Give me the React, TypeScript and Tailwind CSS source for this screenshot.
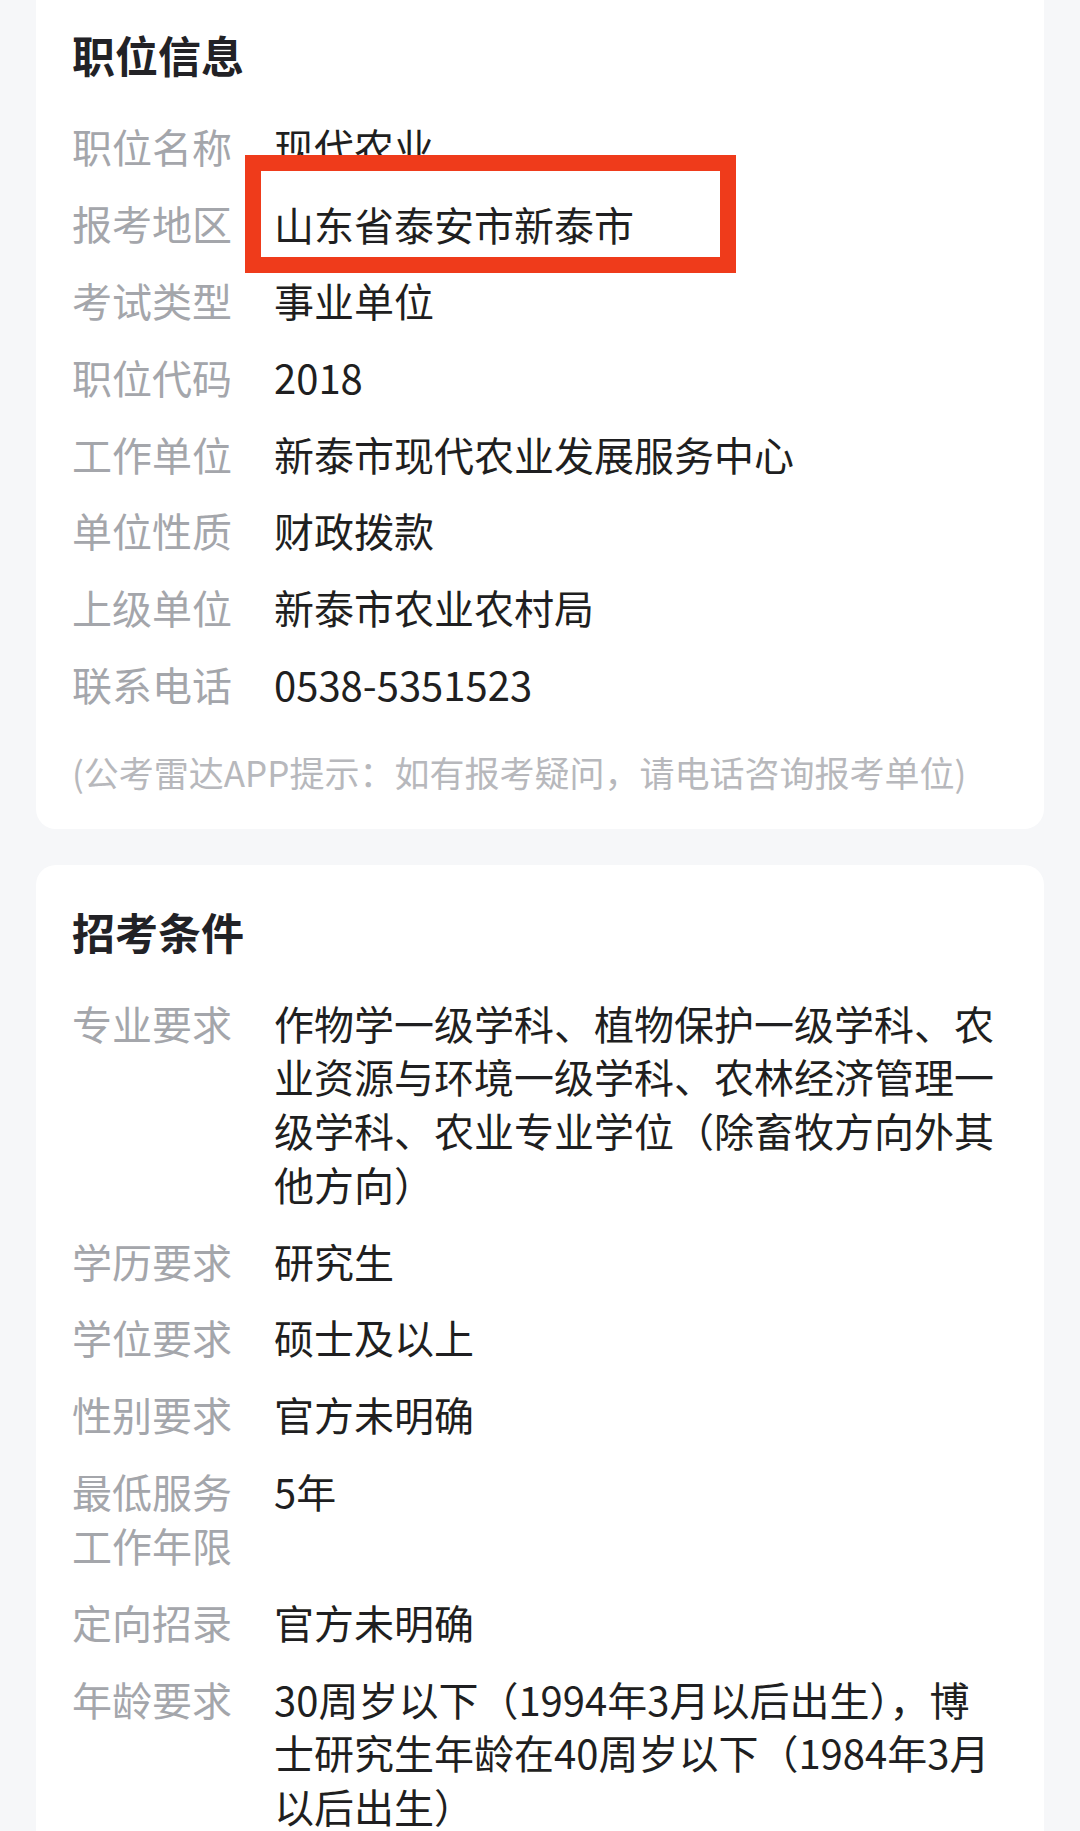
const font = { fontFamily: '"Noto Sans CJK SC", "Noto Sans", sans-serif' }

const jobInfo = [
  { label: '职位名称', value: '现代农业' },
  { label: '报考地区', value: '山东省泰安市新泰市' },
  { label: '考试类型', value: '事业单位' },
  { label: '职位代码', value: '2018' },
  { label: '工作单位', value: '新泰市现代农业发展服务中心' },
  { label: '单位性质', value: '财政拨款' },
  { label: '上级单位', value: '新泰市农业农村局' },
  { label: '联系电话', value: '0538-5351523' },
]

const conditions = [
  { label: '专业要求', value: '作物学一级学科、植物保护一级学科、农业资源与环境一级学科、农林经济管理一级学科、农业专业学位（除畜牧方向外其他方向）' },
  { label: '学历要求', value: '研究生' },
  { label: '学位要求', value: '硕士及以上' },
  { label: '性别要求', value: '官方未明确' },
  { label: '最低服务工作年限', value: '5年' },
  { label: '定向招录', value: '官方未明确' },
  { label: '年龄要求', value: '30周岁以下（1994年3月以后出生），博士研究生年龄在40周岁以下（1984年3月以后出生）' },
]

function InfoRows({ rows }: { rows: { label: string; value: string }[] }) {
  return (
    <div className="mt-[36px] flex flex-col gap-[23.3px]">
      {rows.map((r) => (
        <div key={r.label} className="flex text-[40px] leading-[53.6px]">
          <div className="w-[160px] shrink-0 text-[#a4a6ab]">{r.label}</div>
          <div className="ml-[42px] flex-1 min-w-0 text-[#1f1f21]">{r.value}</div>
        </div>
      ))}
    </div>
  )
}

export default function App() {
  return (
    <div className="relative min-h-[1831px] w-[1080px] bg-[#f6f7f9] overflow-hidden" style={font}>
      {/* 职位信息 */}
      <section className="mx-[36px] rounded-b-[20px] bg-white px-[36px] pt-[24px] pb-[33px]">
        <h2 className="text-[43px] leading-[60px] font-bold text-[#222226]">职位信息</h2>
        <InfoRows rows={jobInfo} />
        <p className="mt-[36px] text-[35px] leading-[48px] text-[#b7b8bc] whitespace-nowrap">
          (公考雷达APP提示：如有报考疑问，请电话咨询报考单位)
        </p>
      </section>

      {/* 招考条件 */}
      <section className="mx-[36px] mt-[36px] rounded-[20px] bg-white px-[36px] pt-[36px] pb-[40px]">
        <h2 className="text-[43px] leading-[60px] font-bold text-[#222226]">招考条件</h2>
        <InfoRows rows={conditions} />
      </section>

      {/* red highlight box pasted over the region row */}
      <div className="absolute left-[245px] top-[155px] h-[118px] w-[491px] border-[16px] border-[#ef3b1b] bg-white pl-[13px] pt-[26px]">
        <div className="text-[40px] leading-[54px] text-[#1f1f21] whitespace-nowrap">山东省泰安市新泰市</div>
      </div>
    </div>
  )
}
